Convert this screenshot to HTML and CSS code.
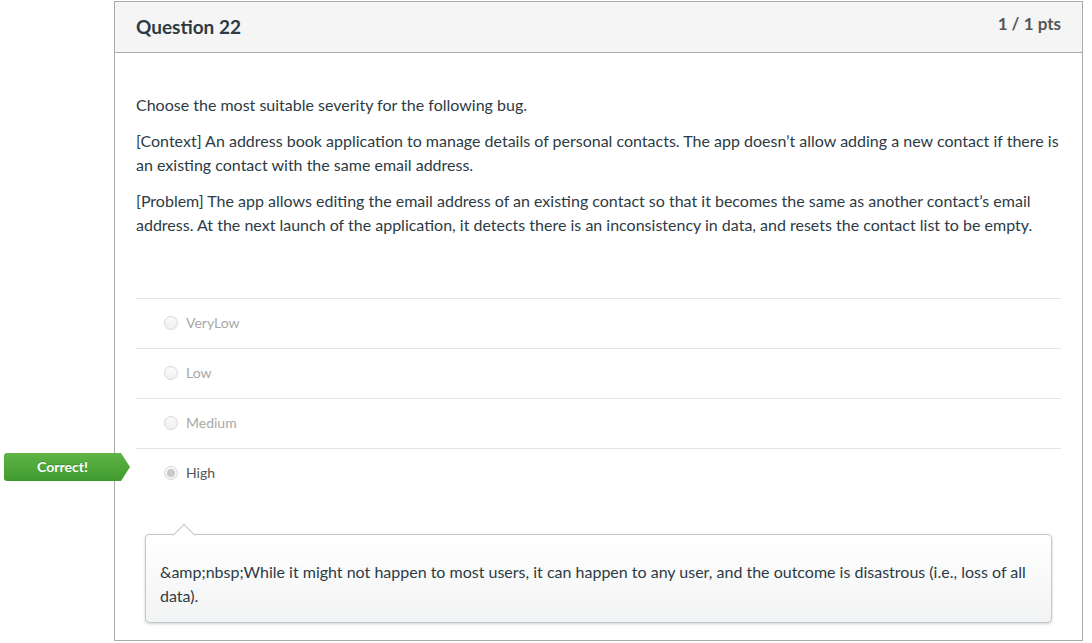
FILE: index.html
```html
<!DOCTYPE html>
<html lang="en">
<head>
<meta charset="utf-8">
<title>Question 22</title>
<link rel="stylesheet" href="styles.css">
</head>
<body>
<div class="page">
  <div class="question">
    <div class="q-header">
      <h2 class="q-title">Question 22</h2>
      <div class="q-pts">1 / 1 pts</div>
    </div>
    <div class="q-body">
      <div class="q-text">
        <p>Choose the most suitable severity for the following bug.</p>
        <p>[Context] An address book application to manage details of personal contacts. The app doesn’t allow adding a new contact if there is an existing contact with the same email address.</p>
        <p>[Problem] The app allows editing the email address of an existing contact so that it becomes the same as another contact’s email address. At the next launch of the application, it detects there is an inconsistency in data, and resets the contact list to be empty.</p>
      </div>
      <div class="answers">
        <div class="answer"><span class="radio"></span><span class="label">VeryLow</span></div>
        <div class="answer"><span class="radio"></span><span class="label">Low</span></div>
        <div class="answer"><span class="radio"></span><span class="label">Medium</span></div>
        <div class="answer answer-selected">
          <span class="badge">Correct!</span>
          <span class="radio radio-on"></span><span class="label">High</span>
        </div>
      </div>
      <div class="comment">
        <p>&amp;amp;nbsp;While it might not happen to most users, it can happen to any user, and the outcome is disastrous (i.e., loss of all data).</p>
      </div>
    </div>
  </div>
</div>
</body>
</html>
```
FILE: styles.css
```css
* { box-sizing: border-box; }
html, body { margin: 0; padding: 0; background: #fff; }
body {
  font-family: Lato, "Open Sans", "Liberation Sans", sans-serif;
  color: #2d3b45;
  font-size: 16px;
}
.page {
  padding: 1px 9px 0 114px;
}
.question {
  border: 1px solid #aaaaaa;
  height: 640px;
}
.q-header {
  display: flex;
  justify-content: space-between;
  align-items: flex-start;
  height: 51px;
  background: #f5f5f5;
  border-bottom: 1px solid #aaaaaa;
  padding: 0 21px;
}
.q-title {
  margin: 0;
  font-size: 19px;
  font-weight: 700;
  line-height: 50px;
  color: #2d3b45;
}
.q-pts {
  font-size: 17px;
  font-weight: 700;
  color: #555;
  line-height: 20px;
  padding-top: 12px;
}
.q-body {
  padding: 40px 21px 0;
}
.q-text p {
  margin: 0 0 12px;
  line-height: 24px;
}
.answers {
  margin-top: 61px;
}
.answer {
  position: relative;
  display: flex;
  align-items: center;
  height: 50px;
  border-top: 1px solid #e4e4e4;
  padding-left: 28px;
  padding-bottom: 2px;
  color: #a8a8a8;
  font-size: 14px;
}
.answer-selected { color: #555; }
.radio {
  width: 14px;
  height: 14px;
  border-radius: 50%;
  border: 1px solid #d8d8d8;
  background: linear-gradient(#fbfbfb, #f0f0f0);
  margin-right: 8px;
  position: relative;
}
.radio-on::after {
  content: "";
  position: absolute;
  left: 2px; top: 2px;
  width: 8px; height: 8px;
  border-radius: 50%;
  background: #c9c9c9;
}
.label { line-height: 20px; }
.badge {
  position: absolute;
  left: -132px;
  top: 4px;
  width: 126px;
  height: 28px;
  line-height: 27px;
  padding-right: 9px;
  text-align: center;
  color: #fff;
  font-weight: 700;
  font-size: 14px;
  background: linear-gradient(#5fb445, #3f9a2e);
  border-radius: 3px 0 0 3px;
  clip-path: polygon(0 0, calc(100% - 9px) 0, 100% 50%, calc(100% - 9px) 100%, 0 100%);
  text-shadow: 0 -1px 0 rgba(0,0,0,0.2);
}
.comment {
  position: relative;
  margin: 36px 9px 0;
  border: 1px solid #c2c8cc;
  border-radius: 4px;
  background: linear-gradient(#ffffff, #f2f3f4);
  box-shadow: 0 1px 3px rgba(0,0,0,0.18);
  padding: 25px 14px 14px;
}
.comment::before {
  content: "";
  position: absolute;
  left: 30px;
  top: -8px;
  width: 15px;
  height: 15px;
  background: #fff;
  border-top: 1px solid #c2c8cc;
  border-left: 1px solid #c2c8cc;
  transform: rotate(45deg);
}
.comment p {
  margin: 0;
  line-height: 24px;
  position: relative;
}
```
